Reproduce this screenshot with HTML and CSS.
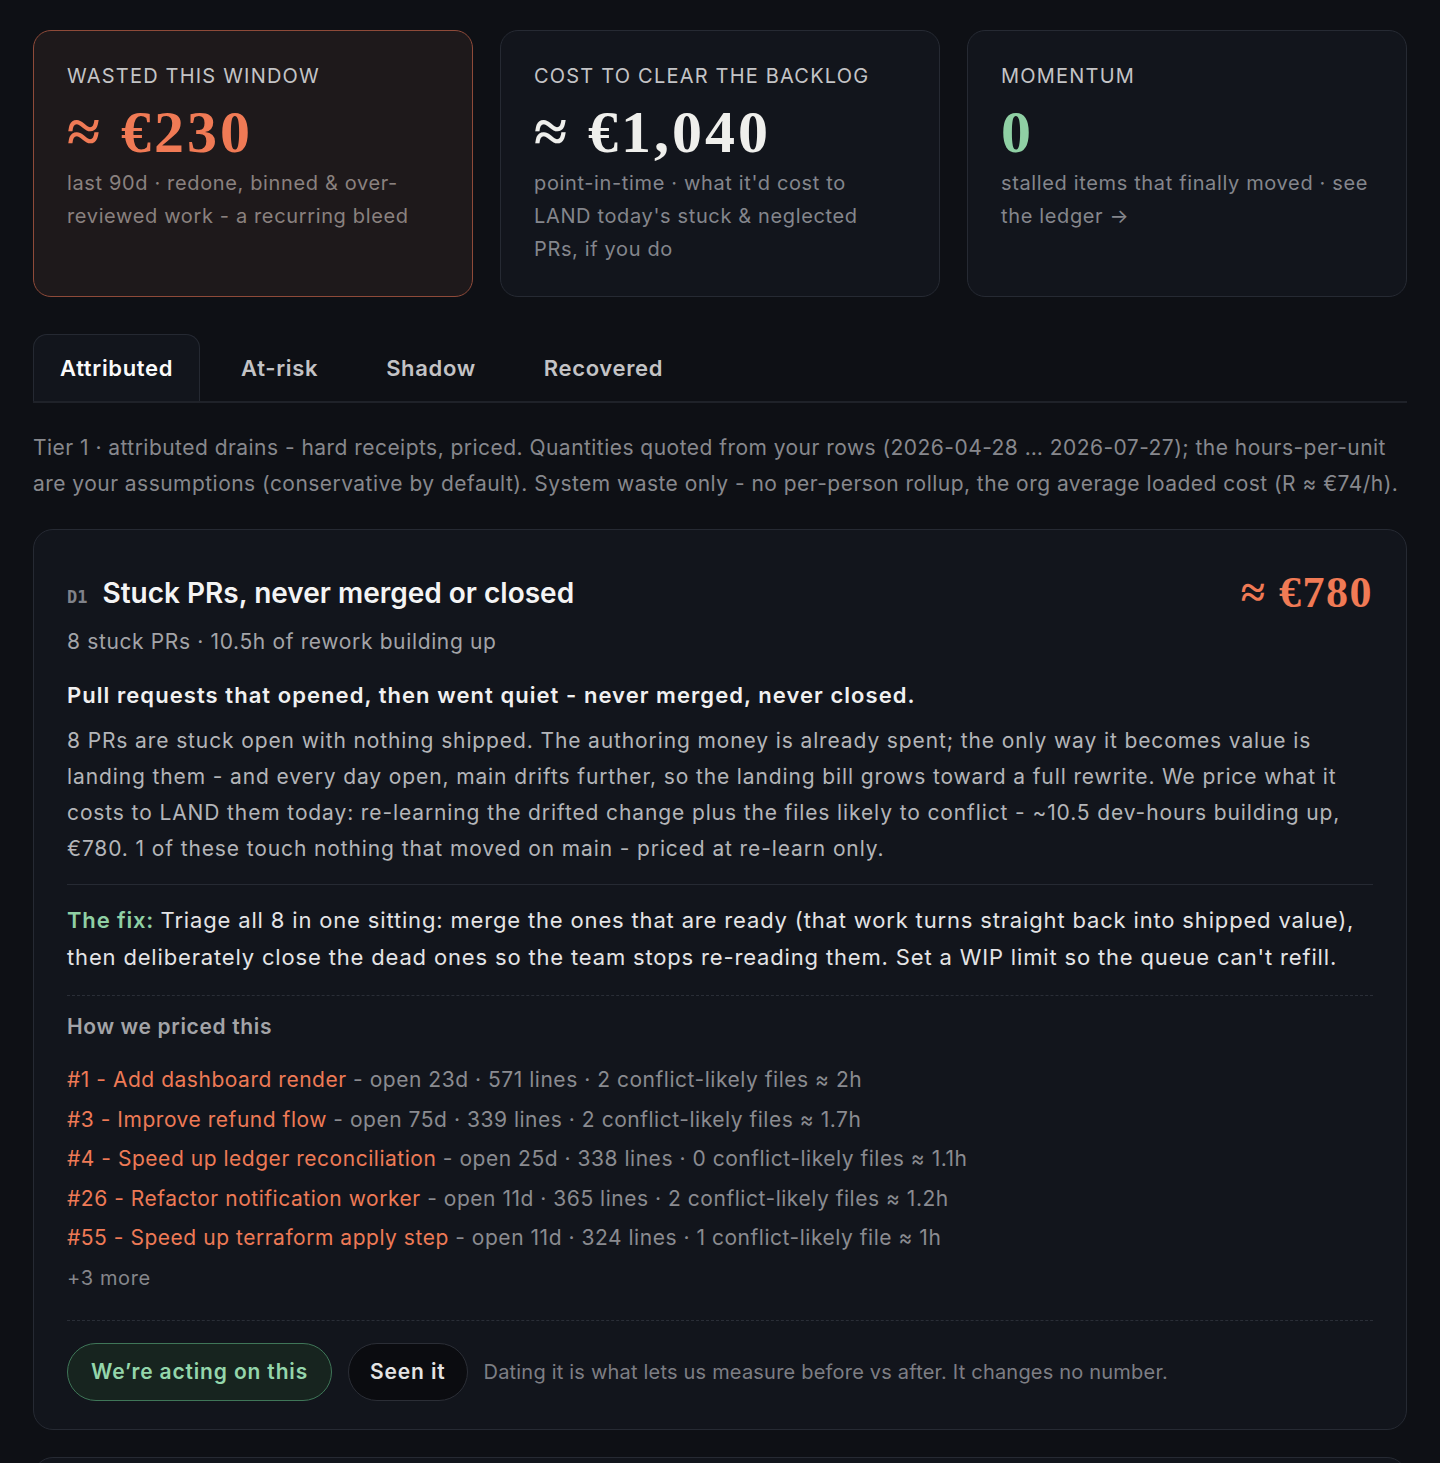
FILE: index.html
```html
<!DOCTYPE html>
<html lang="en">

    <head>
        <meta charset="UTF-8">
        <meta name="viewport" content="width=device-width, initial-scale=1.0">
        <title>Drains</title>
        <link rel="stylesheet" href="styles.css">
    </head>

    <body>
        <div class="stats">
            <div class="stat stat-waste">
                <div class="stat-label">Wasted this window</div>
                <div class="stat-value orange">&asymp; &euro;230</div>
                <div class="stat-note">last 90d &middot; redone, binned &amp; over-reviewed work - a recurring bleed</div>
            </div>
            <div class="stat">
                <div class="stat-label">Cost to clear the backlog</div>
                <div class="stat-value">&asymp; &euro;1,040</div>
                <div class="stat-note">point-in-time &middot; what it'd cost to LAND today's stuck &amp; neglected PRs, if you do</div>
            </div>
            <div class="stat">
                <div class="stat-label">Momentum</div>
                <div class="stat-value green">0</div>
                <div class="stat-note">stalled items that finally moved &middot; see the ledger &rarr;</div>
            </div>
        </div>

        <div class="tabs">
            <div class="tab active">Attributed</div>
            <div class="tab">At-risk</div>
            <div class="tab">Shadow</div>
            <div class="tab">Recovered</div>
        </div>

        <p class="tier-note">Tier 1 &middot; attributed drains - hard receipts, priced. Quantities quoted from your rows (2026-04-28 &hellip; 2026-07-27); the hours-per-unit are your assumptions (conservative by default). System waste only - no per-person rollup, the org average loaded cost (R &asymp; &euro;74/h).</p>

        <div class="drain">
            <div class="drain-head">
                <div class="drain-title">
                    <span class="drain-code">D1</span>
                    <h2>Stuck PRs, never merged or closed</h2>
                </div>
                <div class="drain-amount">&asymp; &euro;780</div>
            </div>
            <div class="drain-sub">8 stuck PRs &middot; 10.5h of rework building up</div>
            <p class="drain-lead">Pull requests that opened, then went quiet - never merged, never closed.</p>
            <p class="drain-body">8 PRs are stuck open with nothing shipped. The authoring money is already spent; the only way it becomes value is landing them - and every day open, main drifts further, so the landing bill grows toward a full rewrite. We price what it costs to LAND them today: re-learning the drifted change plus the files likely to conflict - ~10.5 dev-hours building up, &euro;780. 1 of these touch nothing that moved on main - priced at re-learn only.</p>

            <p class="drain-fix"><b class="fix-label">The fix: </b>Triage all 8 in one sitting: merge the ones that are ready (that work turns straight back into shipped value), then deliberately close the dead ones so the team stops re-reading them. Set a WIP limit so the queue can't refill.</p>

            <div class="priced">
                <div class="priced-title">How we priced this</div>
                <ul class="pr-list">
                    <li><span class="pr">#1 - Add dashboard render</span> - open 23d &middot; 571 lines &middot; 2 conflict-likely files &asymp; 2h</li>
                    <li><span class="pr">#3 - Improve refund flow</span> - open 75d &middot; 339 lines &middot; 2 conflict-likely files &asymp; 1.7h</li>
                    <li><span class="pr">#4 - Speed up ledger reconciliation</span> - open 25d &middot; 338 lines &middot; 0 conflict-likely files &asymp; 1.1h</li>
                    <li><span class="pr">#26 - Refactor notification worker</span> - open 11d &middot; 365 lines &middot; 2 conflict-likely files &asymp; 1.2h</li>
                    <li><span class="pr">#55 - Speed up terraform apply step</span> - open 11d &middot; 324 lines &middot; 1 conflict-likely file &asymp; 1h</li>
                </ul>
                <div class="more">+3 more</div>
            </div>

            <div class="actions">
                <button class="btn btn-act">We&rsquo;re acting on this</button>
                <button class="btn btn-seen">Seen it</button>
                <span class="actions-note">Dating it is what lets us measure before vs after. It changes no number.</span>
            </div>
        </div>

        <div class="drain drain-next"></div>
    </body>

</html>
```

FILE: styles.css
```css
body {
    font-family: Inter, "Noto Sans", sans-serif;
    letter-spacing: 0.04em;
    margin: 0;
    padding: 30px 33px 0;
    background-color: #0e1015;
    color: #e6e6e6;
}

.stats {
    display: grid;
    grid-template-columns: repeat(3, 1fr);
    gap: 27px;
}

.stat {
    height: 267px;
    box-sizing: border-box;
    padding: 33px 33px 0;
    background: #12151c;
    border: 1px solid #262a33;
    border-radius: 18px;
}

.stat-waste {
    background: #1e191b;
    border-color: #8e4a39;
}

.stat-label {
    font-size: 20px;
    letter-spacing: 1.2px;
    text-transform: uppercase;
    color: #c4c4c6;
    line-height: 24px;
}

.stat-value {
    font-family: "Liberation Serif", serif;
    font-weight: bold;
    font-size: 60px;
    letter-spacing: 3px;
    line-height: 62px;
    margin-top: 13px;
    color: #efefec;
}

.orange {
    color: #f07a55;
}

.green {
    color: #8fd0a4;
}

.stat-note {
    font-size: 20px;
    line-height: 33px;
    color: #84868c;
    margin-top: 4px;
}

.stat-waste .stat-note {
    color: #8a817f;
}

.tabs {
    display: flex;
    gap: 14px;
    margin-top: 37px;
    border-bottom: 2px solid #1f2229;
}

.tab {
    padding: 0 26px;
    height: 66px;
    line-height: 66px;
    font-size: 22px;
    font-weight: 600;
    letter-spacing: 0.03em;
    color: #c3c3c5;
    border: 1px solid transparent;
    border-bottom: none;
    border-radius: 14px 14px 0 0;
}

.tab.active {
    background: #12151c;
    border-color: #252932;
    color: #fafafa;
}

.tier-note {
    font-size: 21px;
    letter-spacing: 0.022em;
    line-height: 36px;
    color: #87888d;
    margin: 27px 0 27px;
}

.drain {
    background: #12151c;
    border: 1px solid #262a33;
    border-radius: 20px;
    padding: 37px 33px 28px;
}

.drain-head {
    display: flex;
    justify-content: space-between;
    align-items: center;
}

.drain-title {
    display: flex;
    align-items: baseline;
    gap: 15px;
}

.drain-code {
    font-family: "DejaVu Sans Mono", monospace;
    font-weight: bold;
    font-size: 17px;
    letter-spacing: 0;
    color: #80828a;
}

.drain-title h2 {
    margin: 0;
    font-size: 28px;
    font-weight: 600;
    letter-spacing: 0;
    color: #f4f4f4;
}

.drain-amount {
    font-family: "Liberation Serif", serif;
    font-weight: bold;
    font-size: 44px;
    letter-spacing: 1.5px;
    color: #f07a55;
}

.drain-sub {
    margin-top: 11px;
    font-size: 21px;
    color: #a3a4a8;
}

.drain-lead {
    margin: 28px 0 15px;
    font-size: 22px;
    letter-spacing: 0.048em;
    font-weight: 600;
    color: #f0f0f0;
}

.drain-body {
    margin: 0;
    font-size: 21px;
    letter-spacing: 0.042em;
    line-height: 36px;
    color: #b4b5b9;
    padding-bottom: 17px;
    border-bottom: 1px solid #262a33;
}

.drain-fix {
    margin: 0;
    padding: 17px 0 19px;
    font-size: 22px;
    letter-spacing: 0.038em;
    line-height: 37px;
    color: #e4e4e6;
    border-bottom: 1px dashed #2a2e37;
}

.fix-label {
    color: #8fd0a4;
    font-weight: 600;
}

.priced {
    padding: 18px 0 22px;
    border-bottom: 1px dashed #2a2e37;
}

.priced-title {
    font-size: 21px;
    font-weight: 600;
    color: #a3a4a8;
    margin-bottom: 21px;
}

.pr-list {
    list-style: none;
    margin: 0;
    padding: 0;
}

.pr-list li {
    font-size: 21px;
    letter-spacing: 0.025em;
    line-height: 39.5px;
    color: #8a8b90;
}

.pr {
    color: #ee7a56;
}

.more {
    font-size: 20px;
    line-height: 40px;
    color: #85868b;
}

.actions {
    display: flex;
    align-items: center;
    gap: 16px;
    margin-top: 22px;
}

.btn {
    font-family: inherit;
    letter-spacing: 0.04em;
    font-size: 21px;
    font-weight: 600;
    height: 58px;
    padding: 0 23px;
    border-radius: 29px;
    cursor: pointer;
}

.btn-act {
    background: #17241f;
    border: 1px solid #3f7658;
    color: #94d6ab;
}

.btn-seen {
    background: #0b0c10;
    border: 1px solid #2b2e36;
    color: #e4e4e4;
    padding: 0 21px;
}

.actions-note {
    font-size: 20px;
    letter-spacing: 0.01em;
    color: #7d7e84;
}

.drain-next {
    margin-top: 27px;
    height: 60px;
    padding: 0;
}
```
